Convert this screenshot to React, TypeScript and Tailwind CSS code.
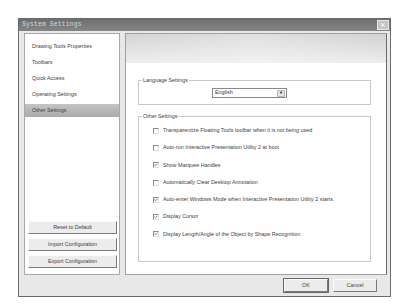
import { Check } from "lucide-react";

const navItems = [
  "Drawing Tools Properties",
  "Toolbars",
  "Quick Access",
  "Operating Settings",
  "Other Settings",
];

const options = [
  { label: "Transparentize Floating Tools toolbar when it is not being used", checked: false },
  { label: "Auto-run Interactive Presentation Utility 2 at boot", checked: false },
  { label: "Show Marquee Handles", checked: true },
  { label: "Automatically Clear Desktop Annotation", checked: false },
  { label: "Auto-enter Windows Mode when Interactive Presentation Utility 2 starts.", checked: true },
  { label: "Display Cursor", checked: true },
  { label: "Display Length/Angle of the Object by Shape Recognition", checked: true },
];

function ClassicButton({ label, isDefault = false }: { label: string; isDefault?: boolean }) {
  return (
    <button
      type="button"
      className={
        "flex h-[13px] w-full items-center justify-center border border-t-[#fafafa] border-l-[#fafafa] border-r-[#7a7a7a] border-b-[#7a7a7a] bg-[#ececec] text-[5.4px] leading-none text-[#404040] " +
        (isDefault ? "outline outline-1 outline-[#666]" : "")
      }
    >
      {label}
    </button>
  );
}

function Checkbox({ checked }: { checked: boolean }) {
  return (
    <span className="flex h-[6px] w-[6px] shrink-0 items-center justify-center border border-t-[#8a8a8a] border-l-[#8a8a8a] border-r-[#e0e0e0] border-b-[#e0e0e0] bg-white">
      {checked ? <Check className="h-[6px] w-[6px] text-[#333]" strokeWidth={4} /> : null}
    </span>
  );
}

export default function App() {
  return (
    <div
      className="h-[304px] w-[406px] bg-white pt-[18px] pl-[18px]"
      style={{ fontFamily: '"Liberation Sans", Arial, sans-serif' }}
    >
      <div className="flex h-[279px] w-[373px] flex-col border border-[#6a6a6a] bg-[#e8e8e8]">
        {/* title bar */}
        <div className="flex h-[12px] items-center justify-between bg-gradient-to-b from-[#6e6e6e] to-[#858585] pr-[1px] pl-[3px]">
          <span
            className="text-[6.3px] leading-none tracking-[0.2px] text-[#d6d6d6]"
            style={{ fontFamily: '"Liberation Mono", "DejaVu Sans Mono", monospace' }}
          >
            System Settings
          </span>
          <span className="flex h-[10px] w-[12px] items-center justify-center border border-[#e8e8e8] bg-[#c4c4c4] text-[9px] leading-none text-white">
            ×
          </span>
        </div>

        {/* body */}
        <div className="flex gap-[5px] pt-[2px] pr-[3px] pl-[5px]">
          {/* left nav */}
          <div className="flex h-[242px] w-[96px] flex-col border border-[#a8a8a8] bg-white">
            <ul className="flex flex-col gap-[3px] pt-[6px]">
              {navItems.map((item) => (
                <li
                  key={item}
                  className={
                    "flex h-[13px] items-center pl-[7px] text-[5.4px] leading-none text-[#404040] " +
                    (item === "Other Settings" ? "bg-gradient-to-b from-[#c4c4c4] to-[#aaaaaa]" : "")
                  }
                >
                  {item}
                </li>
              ))}
            </ul>
            <div className="mt-auto flex flex-col gap-[4px] pr-[2px] pb-[6px] pl-[3px]">
              <ClassicButton label="Reset to Default" />
              <ClassicButton label="Import Configuration" />
              <ClassicButton label="Export Configuration" />
            </div>
          </div>

          {/* right panel */}
          <div className="flex h-[242px] flex-1 flex-col border border-[#a0a0a0] border-r-[#6a6a6a] bg-white">
            <div className="h-[29px] bg-gradient-to-r from-[#d4d4d4] via-[#e0e0e0] to-[#d2d2d2]">
              <div className="h-full w-full bg-gradient-to-b from-transparent via-white/30 to-white/60" />
            </div>

            <fieldset className="mt-[14px] ml-[12px] w-[233px] border border-[#c8c8c8] px-0 pt-[4px] pb-[6px]">
              <legend className="ml-[3px] px-[1px] text-[5.4px] leading-[7px] text-[#404040]">
                Language Settings
              </legend>
              <div className="ml-[73px] flex h-[10px] w-[75px] items-center justify-between border border-[#8a8a8a] bg-white pr-[1px] pl-[2px]">
                <span className="text-[5.4px] leading-none text-[#333]">English</span>
                <span className="flex h-[7px] w-[8px] items-center justify-center border border-[#bbb] bg-[#e4e4e4] text-[4px] leading-none text-[#111]">
                  ▼
                </span>
              </div>
            </fieldset>

            <fieldset className="mt-[8px] ml-[12px] w-[233px] border border-[#c8c8c8] px-0 pt-[2px] pb-[18px]">
              <legend className="ml-[3px] px-[1px] text-[5.4px] leading-[7px] text-[#404040]">
                Other Settings
              </legend>
              <ul className="flex flex-col pl-[14px]">
                {options.map((opt) => (
                  <li key={opt.label} className="flex h-[17.3px] items-center gap-[4px]">
                    <Checkbox checked={opt.checked} />
                    <span className="text-[5.4px] leading-none whitespace-nowrap text-[#404040]">
                      {opt.label}
                    </span>
                  </li>
                ))}
              </ul>
            </fieldset>
          </div>
        </div>

        {/* footer */}
        <div className="flex flex-1 items-start justify-end gap-[5px] pt-[4px] pr-[13px]">
          <div className="w-[44px]">
            <ClassicButton label="OK" isDefault />
          </div>
          <div className="w-[44px]">
            <ClassicButton label="Cancel" />
          </div>
        </div>
      </div>
    </div>
  );
}
